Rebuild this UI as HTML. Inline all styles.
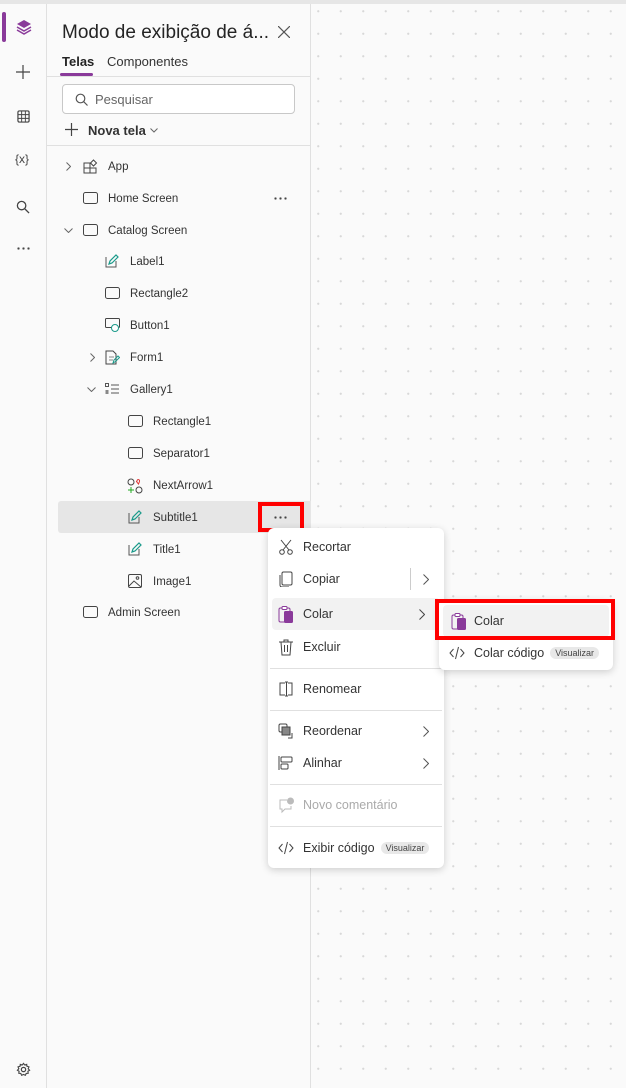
<!DOCTYPE html>
<html><head><meta charset="utf-8"><style>
*{box-sizing:border-box;margin:0;padding:0}
body{width:626px;height:1088px;overflow:hidden;font-family:"Liberation Sans",sans-serif;color:#242424;background:#fafafa;position:relative}
.top{position:absolute;left:0;top:0;width:626px;height:4px;background:#e6e6e6}
.rail{position:absolute;left:0;top:4px;width:47px;height:1084px;background:#fafafa;border-right:1px solid #e0e0e0}
.rail .sel{position:absolute;left:2px;top:8px;width:4px;height:30px;background:#8a3a9a;border-radius:2px}
.rail svg{position:absolute}
.panel{position:absolute;left:47px;top:4px;width:264px;height:1084px;background:#fafafa;border-right:1px solid #e0e0e0}
.canvas{position:absolute;left:311px;top:4px;width:315px;height:1084px;background-color:#fafafa;background-image:radial-gradient(circle,#d8d8d8 0.9px,transparent 1.3px);background-size:22.5px 22.5px;background-position:-4px -4px}
.title{position:absolute;left:15px;top:18px;font-size:19px;color:#242424}
.tab{position:absolute;top:50px;font-size:13px}
.tabline{position:absolute;left:13px;top:69px;width:33px;height:3px;background:#8a3a9a;border-radius:2px}
.hr{position:absolute;left:0;width:264px;height:1px;background:#e0e0e0}
.search{position:absolute;left:15px;top:80px;width:233px;height:30px;border:1px solid #c8c8c8;border-radius:4px;background:#fff}
.search span{position:absolute;left:32px;top:7px;font-size:13px;color:#666}
.row{position:absolute;left:0;width:264px;height:32px;font-size:11.5px;color:#333}
.row>span{position:absolute;top:11px;white-space:nowrap}
.ico{position:absolute;top:9px}
.dots{position:absolute;top:15px;width:14px;height:3px;background:radial-gradient(circle,#444 1px,transparent 1.3px);background-size:5px 3px}
.menu{position:absolute;background:#fff;border-radius:6px;box-shadow:0 2px 8px rgba(0,0,0,.18)}
.mi{position:absolute;left:0;height:32px;width:100%;font-size:12.5px;color:#333}
.mi>span{position:absolute;left:35px;top:9px;white-space:nowrap}
.mi svg{position:absolute;left:10px;top:8px}
.mi svg.chev{left:auto;right:15px;top:11px}
.sep{position:absolute;left:2px;right:2px;height:1px;background:#e0e0e0}
.badge{display:inline-block;background:#e8e8e8;border-radius:8px;font-size:9px;padding:1px 5px;margin-left:6px;vertical-align:1px;color:#444}
.red{position:absolute;border:4px solid #f00}
</style></head><body>
<div class="top"></div>
<div class="rail">
<div class="sel"></div>
<svg style="top:15px;left:16px" width="16" height="16" viewBox="0 0 16 16"><path d="M8 1L15 5L8 9L1 5Z" fill="#8a3a9a"/><path d="M1 8L8 12L15 8M1 11L8 15L15 11" stroke="#8a3a9a" fill="none" stroke-width="1.5"/></svg>
<svg style="top:61px;left:16px" width="14" height="14" viewBox="0 0 14 14"><path d="M7 0V14M0 7H14" stroke="#444" stroke-width="1.2"/></svg>
<svg style="top:106px;left:17px" width="13" height="13" viewBox="0 0 14 14"><rect x="1" y="1" width="12" height="12" rx="1.5" fill="none" stroke="#444" stroke-width="1.3"/><path d="M1 5H13M1 9H13M5 1V13M9 1V13" stroke="#444"/></svg>
<div style="position:absolute;left:15px;top:148px;font-size:12px;color:#444">{x}</div>
<svg style="top:196px;left:16px" width="14" height="14" viewBox="0 0 15 15"><circle cx="6" cy="6" r="4.5" fill="none" stroke="#444" stroke-width="1.4"/><path d="M9.5 9.5L14 14" stroke="#444" stroke-width="1.4"/></svg>
<div class="dots" style="left:16px;top:243px"></div>
<svg style="top:1058px;left:16px" width="15" height="15" viewBox="0 0 16 16"><circle cx="8" cy="8" r="2.3" fill="none" stroke="#444" stroke-width="1.3"/><path d="M8 1.5L9.3 3.2L11.4 2.5L11.7 4.6L13.8 5.2L13 7.2L14.5 8.8L12.7 9.9L13 12L10.9 12.2L10 14.2L8 13.3L6 14.2L5.1 12.2L3 12L3.3 9.9L1.5 8.8L3 7.2L2.2 5.2L4.3 4.6L4.6 2.5L6.7 3.2Z" fill="none" stroke="#444" stroke-width="1.2"/></svg>
</div>
<div class="panel">
<div class="title">Modo de exibição de á...</div>
<svg style="position:absolute;left:231px;top:22px" width="12" height="12" viewBox="0 0 12 12"><path d="M0 0L12 12M12 0L0 12" stroke="#555" stroke-width="1.2"/></svg>
<div class="tab" style="left:15px;font-weight:bold">Telas</div>
<div class="tab" style="left:60px;color:#333">Componentes</div>
<div class="tabline"></div>
<div class="hr" style="top:72px"></div>
<div class="search"><svg style="position:absolute;left:12px;top:8px" width="13" height="13" viewBox="0 0 13 13"><circle cx="5.5" cy="5.5" r="4.3" fill="none" stroke="#555" stroke-width="1.2"/><path d="M8.6 8.6L12.5 12.5" stroke="#555" stroke-width="1.2"/></svg><span>Pesquisar</span></div>
<svg style="position:absolute;left:18px;top:119px" width="13" height="13" viewBox="0 0 13 13"><path d="M6.5 0V13M0 6.5H13" stroke="#444" stroke-width="1.2"/></svg>
<div style="position:absolute;left:41px;top:119px;font-size:13px;font-weight:bold;color:#333">Nova tela</div>
<svg style="position:absolute;left:103px;top:124px" width="8" height="5" viewBox="0 0 8 5"><path d="M.5 .5L4 4L7.5 .5" fill="none" stroke="#666"/></svg>
<div class="hr" style="top:141px"></div>

<div class="row" style="top:146px"><svg class="ico" style="left:19px;top:12px" width="5" height="9" viewBox="0 0 5 9"><path d="M.5 .5L4.5 4.5L.5 8.5" fill="none" stroke="#666"/></svg><svg class="ico" style="left:36px" width="15" height="15" viewBox="0 0 15 15"><path d="M1 4H7V14H1ZM1 9H13V14H7" fill="none" stroke="#444"/><path d="M10.5 1L13.5 4L10.5 7L7.5 4Z" fill="none" stroke="#444"/></svg><span style="left:61px">App</span></div>
<div class="row" style="top:178px"><svg class="ico" style="left:36px;top:10px" width="15" height="12"><rect x=".5" y=".5" width="14" height="11" rx="2" fill="none" stroke="#444"/></svg><span style="left:61px">Home Screen</span><div class="dots" style="left:226px"></div></div>
<div class="row" style="top:210px"><svg class="ico" style="left:17px;top:14px" width="9" height="5" viewBox="0 0 9 5"><path d="M.5 .5L4.5 4.5L8.5 .5" fill="none" stroke="#666"/></svg><svg class="ico" style="left:36px;top:10px" width="15" height="12"><rect x=".5" y=".5" width="14" height="11" rx="2" fill="none" stroke="#444"/></svg><span style="left:61px">Catalog Screen</span></div>
<div class="row" style="top:241px"><svg class="ico" style="left:58px" width="14" height="14" viewBox="0 0 14 14"><path d="M1 3V13H11V7" fill="none" stroke="#555"/><path d="M4 10L5 7L11 1L13 3L7 9Z" fill="none" stroke="#1a9a8a" stroke-width="1.2"/></svg><span style="left:83px">Label1</span></div>
<div class="row" style="top:273px"><svg class="ico" style="left:58px;top:10px" width="15" height="12"><rect x=".5" y=".5" width="14" height="11" rx="2" fill="none" stroke="#444"/></svg><span style="left:83px">Rectangle2</span></div>
<div class="row" style="top:305px"><svg class="ico" style="left:58px" width="16" height="15" viewBox="0 0 16 15"><rect x=".5" y=".5" width="14" height="9" rx="1" fill="none" stroke="#444"/><circle cx="10" cy="10" r="3.5" fill="#fff" stroke="#1a9a8a"/></svg><span style="left:83px">Button1</span></div>
<div class="row" style="top:337px"><svg class="ico" style="left:43px;top:12px" width="5" height="9" viewBox="0 0 5 9"><path d="M.5 .5L4.5 4.5L.5 8.5" fill="none" stroke="#666"/></svg><svg class="ico" style="left:58px" width="15" height="15" viewBox="0 0 15 15"><path d="M1 1H8L11 4V14H1Z" fill="none" stroke="#444"/><path d="M4 7H9M4 10H8" stroke="#888"/><path d="M8 13L9 10L13 6L14.5 7.5L10.5 11.5Z" fill="none" stroke="#1a9a8a"/></svg><span style="left:83px">Form1</span></div>
<div class="row" style="top:369px"><svg class="ico" style="left:40px;top:14px" width="9" height="5" viewBox="0 0 9 5"><path d="M.5 .5L4.5 4.5L8.5 .5" fill="none" stroke="#666"/></svg><svg class="ico" style="left:58px;top:10px" width="14" height="12" viewBox="0 0 14 12"><rect x=".5" y=".5" width="3" height="3" fill="none" stroke="#555"/><rect x=".5" y="7" width="3" height="4" fill="#888"/><path d="M6 2H14M6 6H14M6 10H14" stroke="#555"/></svg><span style="left:83px">Gallery1</span></div>
<div class="row" style="top:401px"><svg class="ico" style="left:81px;top:10px" width="15" height="12"><rect x=".5" y=".5" width="14" height="11" rx="2" fill="none" stroke="#444"/></svg><span style="left:106px">Rectangle1</span></div>
<div class="row" style="top:433px"><svg class="ico" style="left:81px;top:10px" width="15" height="12"><rect x=".5" y=".5" width="14" height="11" rx="2" fill="none" stroke="#444"/></svg><span style="left:106px">Separator1</span></div>
<div class="row" style="top:465px"><svg class="ico" style="left:80px" width="16" height="16" viewBox="0 0 16 16"><circle cx="4" cy="4" r="3" fill="none" stroke="#444"/><path d="M10 3C10 1 13 1 12.5 3.5L11.5 6L9.5 3.5Z" fill="none" stroke="#d33"/><path d="M4 9V15M1 12H7" stroke="#2a2"/><circle cx="12" cy="12" r="3" fill="none" stroke="#444"/></svg><span style="left:106px">NextArrow1</span></div>
<div class="row" style="top:497px;left:11px;width:253px;background:#e6e6e6;border-radius:3px 0 0 3px"><svg class="ico" style="left:70px" width="14" height="14" viewBox="0 0 14 14"><path d="M1 3V13H11V7" fill="none" stroke="#555"/><path d="M4 10L5 7L11 1L13 3L7 9Z" fill="none" stroke="#1a9a8a" stroke-width="1.2"/></svg><span style="left:95px">Subtitle1</span><div class="dots" style="left:215px"></div></div>
<div class="row" style="top:529px"><svg class="ico" style="left:81px" width="14" height="14" viewBox="0 0 14 14"><path d="M1 3V13H11V7" fill="none" stroke="#555"/><path d="M4 10L5 7L11 1L13 3L7 9Z" fill="none" stroke="#1a9a8a" stroke-width="1.2"/></svg><span style="left:106px">Title1</span></div>
<div class="row" style="top:561px"><svg class="ico" style="left:81px" width="14" height="14" viewBox="0 0 14 14"><rect x=".5" y=".5" width="13" height="13" rx="1.5" fill="none" stroke="#444"/><path d="M1 12L6 7L13 13" fill="none" stroke="#444"/><circle cx="9.5" cy="4" r="1.3" fill="none" stroke="#444"/></svg><span style="left:106px">Image1</span></div>
<div class="row" style="top:592px"><svg class="ico" style="left:36px;top:10px" width="15" height="12"><rect x=".5" y=".5" width="14" height="11" rx="2" fill="none" stroke="#444"/></svg><span style="left:61px">Admin Screen</span></div>
</div>
<div class="canvas"></div>
<div class="red" style="left:258px;top:502px;width:46px;height:30px"></div>

<div class="menu" style="left:268px;top:528px;width:176px;height:340px">
<div class="mi" style="top:3px"><svg width="16" height="16" viewBox="0 0 16 16"><path d="M3 1L11 11M13 1L5 11" stroke="#444" fill="none"/><circle cx="4" cy="13" r="2.3" fill="none" stroke="#444"/><circle cx="12" cy="13" r="2.3" fill="none" stroke="#444"/></svg><span>Recortar</span></div>
<div class="mi" style="top:35px"><svg width="16" height="16" viewBox="0 0 16 16"><rect x="4" y="1" width="10" height="13" rx="1.5" fill="none" stroke="#444"/><path d="M2 4V14Q2 16 4 16H11" fill="none" stroke="#444"/></svg><span>Copiar</span><div style="position:absolute;left:142px;top:5px;width:1px;height:22px;background:#ccc"></div><svg class="chev" width="6" height="11" viewBox="0 0 6 11"><path d="M.5 .5L5.5 5.5L.5 10.5" fill="none" stroke="#555"/></svg></div>
<div class="mi" style="top:70px;left:4px;width:168px;background:#f2f2f2;border-radius:4px"><svg style="left:6px" width="16" height="18" viewBox="0 0 16 18"><rect x="1" y="2" width="11" height="14" rx="1.5" fill="none" stroke="#8a3a9a"/><rect x="6" y="5" width="9" height="12" rx="1.5" fill="#8a3a9a"/><rect x="4" y="0.5" width="5" height="3" rx="1" fill="#fff" stroke="#8a3a9a"/></svg><span style="left:31px">Colar</span><svg class="chev" style="right:15px" width="6" height="11" viewBox="0 0 6 11"><path d="M.5 .5L5.5 5.5L.5 10.5" fill="none" stroke="#444"/></svg></div>
<div class="mi" style="top:103px"><svg width="16" height="17" viewBox="0 0 16 17"><path d="M1 3H15M6 3V1H10V3M3 3L4 16H12L13 3M6.5 6V13M9.5 6V13" fill="none" stroke="#444"/></svg><span>Excluir</span></div>
<div class="sep" style="top:140px"></div>
<div class="mi" style="top:145px"><svg width="16" height="16" viewBox="0 0 16 16"><path d="M7 2H2V14H7M10 2H14V14H10M8.5 1V15M7 1H10M7 15H10" fill="none" stroke="#444"/></svg><span>Renomear</span></div>
<div class="sep" style="top:182px"></div>
<div class="mi" style="top:187px"><svg width="17" height="17" viewBox="0 0 17 17"><rect x="1" y="1" width="8" height="8" rx="1.5" fill="none" stroke="#444"/><rect x="4" y="4" width="8" height="8" fill="#888" stroke="#444"/><path d="M14 10V15H10" fill="none" stroke="#444"/></svg><span>Reordenar</span><svg class="chev" width="6" height="11" viewBox="0 0 6 11"><path d="M.5 .5L5.5 5.5L.5 10.5" fill="none" stroke="#555"/></svg></div>
<div class="mi" style="top:219px"><svg width="16" height="16" viewBox="0 0 16 16"><path d="M1 1V15" stroke="#444"/><rect x="3" y="2" width="11" height="5" rx="1" fill="none" stroke="#444"/><rect x="3" y="9" width="7" height="5" rx="1" fill="none" stroke="#444"/></svg><span>Alinhar</span><svg class="chev" width="6" height="11" viewBox="0 0 6 11"><path d="M.5 .5L5.5 5.5L.5 10.5" fill="none" stroke="#555"/></svg></div>
<div class="sep" style="top:256px"></div>
<div class="mi" style="top:261px;color:#aaa"><svg width="17" height="17" viewBox="0 0 17 17"><path d="M9 3H2V12H4V15L7 12H13V9" fill="none" stroke="#bbb"/><circle cx="12.5" cy="4" r="3.5" fill="#bbb"/></svg><span>Novo comentário</span></div>
<div class="sep" style="top:298px"></div>
<div class="mi" style="top:304px"><svg width="16" height="16" viewBox="0 0 16 16"><path d="M4.5 4L1 8L4.5 12M11.5 4L15 8L11.5 12M9.5 2L6.5 14" fill="none" stroke="#444"/></svg><span>Exibir código<span class="badge">Visualizar</span></span></div>
</div>

<div class="menu" style="left:439px;top:600px;width:174px;height:70px">
<div class="mi" style="top:5px;left:4px;width:166px;background:#f2f2f2;border-radius:4px"><svg style="left:8px" width="16" height="18" viewBox="0 0 16 18"><rect x="1" y="2" width="11" height="14" rx="1.5" fill="none" stroke="#8a3a9a"/><rect x="6" y="5" width="9" height="12" rx="1.5" fill="#8a3a9a"/><rect x="4" y="0.5" width="5" height="3" rx="1" fill="#fff" stroke="#8a3a9a"/></svg><span style="left:31px">Colar</span></div>
<div class="mi" style="top:37px"><svg width="16" height="16" viewBox="0 0 16 16"><path d="M4.5 4L1 8L4.5 12M11.5 4L15 8L11.5 12M9.5 2L6.5 14" fill="none" stroke="#444"/></svg><span style="left:35px">Colar código<span class="badge">Visualizar</span></span></div>
</div>
<div class="red" style="left:435px;top:599px;width:180px;height:41px"></div>
</body></html>
